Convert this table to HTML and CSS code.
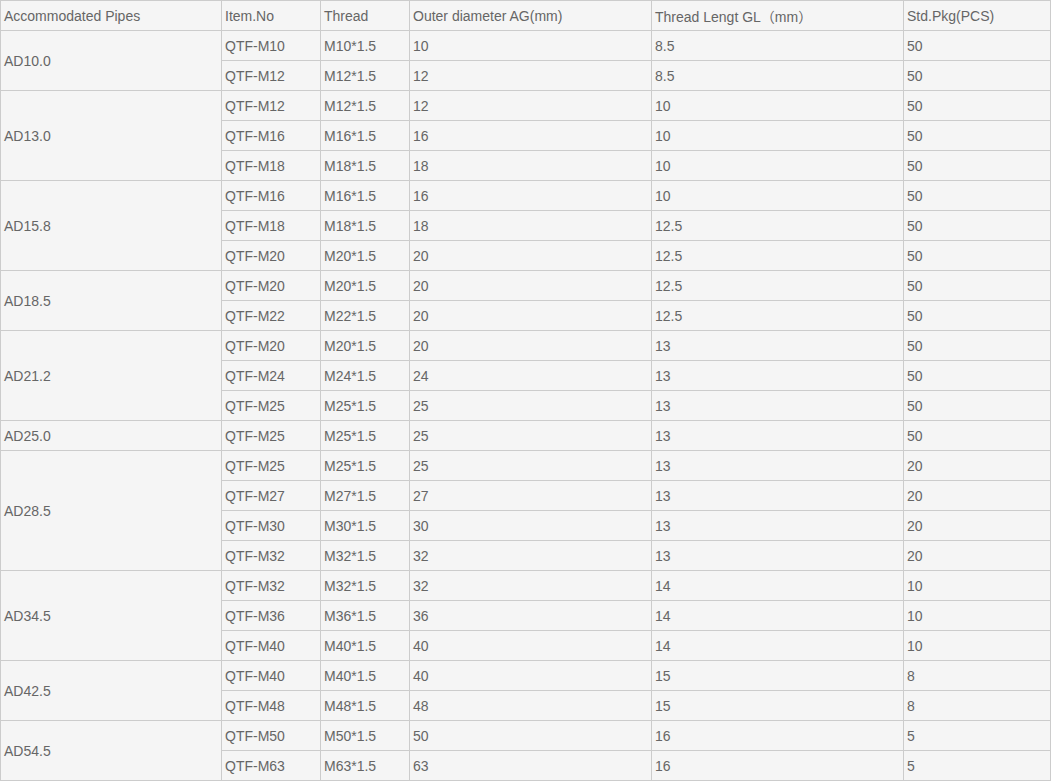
FILE: index.html
```html
<!DOCTYPE html>
<html>
<head>
<meta charset="utf-8">
<link rel="stylesheet" href="styles.css">
</head>
<body>
<table class="spec">
<colgroup>
<col class="c1"><col class="c2"><col class="c3"><col class="c4"><col class="c5"><col class="c6">
</colgroup>
<tbody>
<tr><td>Accommodated Pipes</td><td>Item.No</td><td>Thread</td><td>Outer diameter AG(mm)</td><td>Thread Lengt GL（mm）</td><td>Std.Pkg(PCS)</td></tr>
<tr><td rowspan="2">AD10.0</td><td>QTF-M10</td><td>M10*1.5</td><td>10</td><td>8.5</td><td>50</td></tr>
<tr><td>QTF-M12</td><td>M12*1.5</td><td>12</td><td>8.5</td><td>50</td></tr>
<tr><td rowspan="3">AD13.0</td><td>QTF-M12</td><td>M12*1.5</td><td>12</td><td>10</td><td>50</td></tr>
<tr><td>QTF-M16</td><td>M16*1.5</td><td>16</td><td>10</td><td>50</td></tr>
<tr><td>QTF-M18</td><td>M18*1.5</td><td>18</td><td>10</td><td>50</td></tr>
<tr><td rowspan="3">AD15.8</td><td>QTF-M16</td><td>M16*1.5</td><td>16</td><td>10</td><td>50</td></tr>
<tr><td>QTF-M18</td><td>M18*1.5</td><td>18</td><td>12.5</td><td>50</td></tr>
<tr><td>QTF-M20</td><td>M20*1.5</td><td>20</td><td>12.5</td><td>50</td></tr>
<tr><td rowspan="2">AD18.5</td><td>QTF-M20</td><td>M20*1.5</td><td>20</td><td>12.5</td><td>50</td></tr>
<tr><td>QTF-M22</td><td>M22*1.5</td><td>20</td><td>12.5</td><td>50</td></tr>
<tr><td rowspan="3">AD21.2</td><td>QTF-M20</td><td>M20*1.5</td><td>20</td><td>13</td><td>50</td></tr>
<tr><td>QTF-M24</td><td>M24*1.5</td><td>24</td><td>13</td><td>50</td></tr>
<tr><td>QTF-M25</td><td>M25*1.5</td><td>25</td><td>13</td><td>50</td></tr>
<tr><td>AD25.0</td><td>QTF-M25</td><td>M25*1.5</td><td>25</td><td>13</td><td>50</td></tr>
<tr><td rowspan="4">AD28.5</td><td>QTF-M25</td><td>M25*1.5</td><td>25</td><td>13</td><td>20</td></tr>
<tr><td>QTF-M27</td><td>M27*1.5</td><td>27</td><td>13</td><td>20</td></tr>
<tr><td>QTF-M30</td><td>M30*1.5</td><td>30</td><td>13</td><td>20</td></tr>
<tr><td>QTF-M32</td><td>M32*1.5</td><td>32</td><td>13</td><td>20</td></tr>
<tr><td rowspan="3">AD34.5</td><td>QTF-M32</td><td>M32*1.5</td><td>32</td><td>14</td><td>10</td></tr>
<tr><td>QTF-M36</td><td>M36*1.5</td><td>36</td><td>14</td><td>10</td></tr>
<tr><td>QTF-M40</td><td>M40*1.5</td><td>40</td><td>14</td><td>10</td></tr>
<tr><td rowspan="2">AD42.5</td><td>QTF-M40</td><td>M40*1.5</td><td>40</td><td>15</td><td>8</td></tr>
<tr><td>QTF-M48</td><td>M48*1.5</td><td>48</td><td>15</td><td>8</td></tr>
<tr><td rowspan="2">AD54.5</td><td>QTF-M50</td><td>M50*1.5</td><td>50</td><td>16</td><td>5</td></tr>
<tr><td>QTF-M63</td><td>M63*1.5</td><td>63</td><td>16</td><td>5</td></tr>
</tbody>
</table>
</body>
</html>
```

FILE: styles.css
```css
html, body {
  margin: 0;
  padding: 0;
  background: #ffffff;
}

.spec {
  border-collapse: collapse;
  table-layout: fixed;
  width: 1050px;
  background: #f5f5f5;
  font-family: "Liberation Sans", Arial, "Noto Sans CJK SC", sans-serif;
  font-size: 14px;
  color: #666666;
}

.spec .c1 { width: 221px; }
.spec .c2 { width: 99px; }
.spec .c3 { width: 89px; }
.spec .c4 { width: 242px; }
.spec .c5 { width: 252px; }
.spec .c6 { width: 147px; }

.spec td {
  border: 1px solid #cccccc;
  height: 30px;
  padding: 1px 3px 0;
  vertical-align: middle;
  white-space: nowrap;
  box-sizing: border-box;
}
```
